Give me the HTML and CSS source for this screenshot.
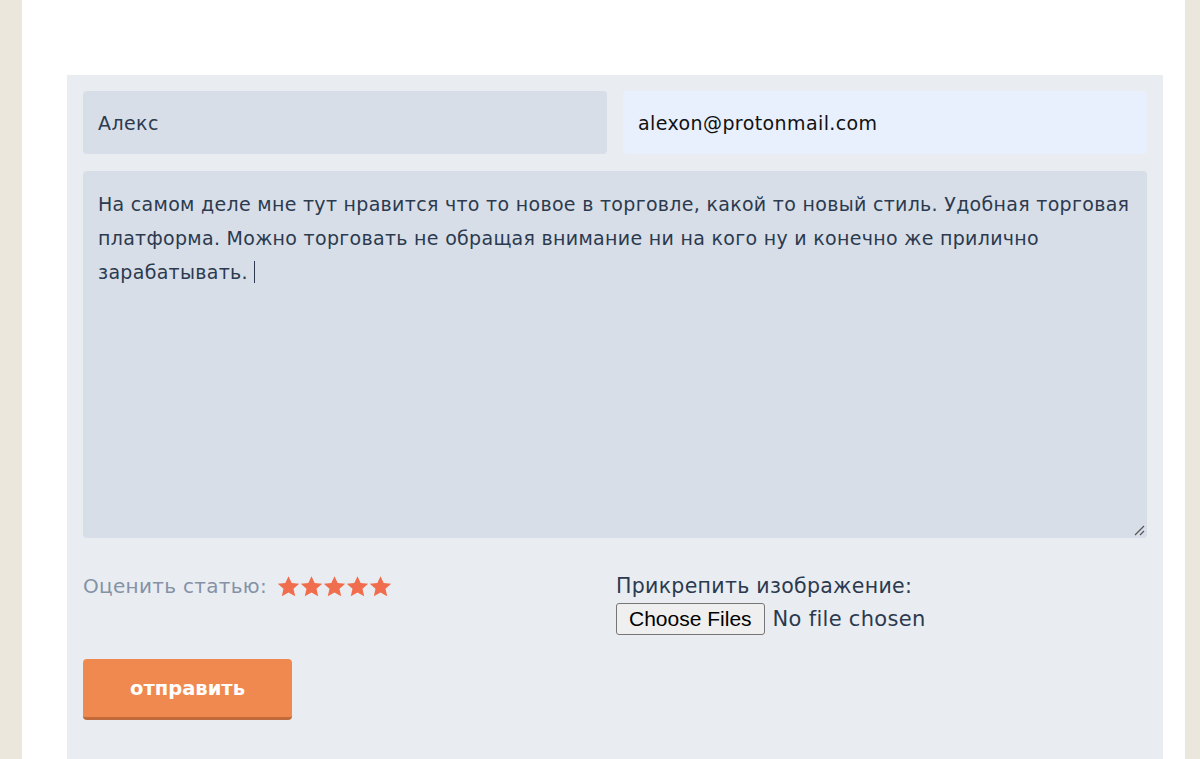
FILE: index.html
```html
<!DOCTYPE html>
<html lang="ru">
<head>
<meta charset="utf-8">
<title>Отзыв</title>
<link rel="stylesheet" href="styles.css">
</head>
<body>
<div class="page">
  <form class="panel">
    <div class="row">
      <div class="field name">Алекс</div>
      <div class="field email">alexon@protonmail.com</div>
    </div>
    <div class="area">
      <p>На самом деле мне тут нравится что то новое в торговле, какой то новый стиль. Удобная торговая платформа. Можно торговать не обращая внимание ни на кого ну и конечно же прилично зарабатывать. <span class="caret"></span></p>
      <svg class="grip" width="12" height="12" viewBox="0 0 12 12"><path d="M2 11 L11 2 M7 11 L11 7" stroke="#555" stroke-width="1.2" fill="none"/></svg>
    </div>
    <div class="bottom">
      <div class="rate">
        <span class="rate-label">Оценить статью:</span>
        <span class="stars">
          <svg viewBox="0 0 24 24" width="23" height="23"><path d="M12 1.2l3.3 7.2 7.9.8-6 5.2 1.8 7.8L12 18.2l-7 4 1.8-7.8-6-5.2 7.9-.8z" fill="#f06d4d"/></svg>
          <svg viewBox="0 0 24 24" width="23" height="23"><path d="M12 1.2l3.3 7.2 7.9.8-6 5.2 1.8 7.8L12 18.2l-7 4 1.8-7.8-6-5.2 7.9-.8z" fill="#f06d4d"/></svg>
          <svg viewBox="0 0 24 24" width="23" height="23"><path d="M12 1.2l3.3 7.2 7.9.8-6 5.2 1.8 7.8L12 18.2l-7 4 1.8-7.8-6-5.2 7.9-.8z" fill="#f06d4d"/></svg>
          <svg viewBox="0 0 24 24" width="23" height="23"><path d="M12 1.2l3.3 7.2 7.9.8-6 5.2 1.8 7.8L12 18.2l-7 4 1.8-7.8-6-5.2 7.9-.8z" fill="#f06d4d"/></svg>
          <svg viewBox="0 0 24 24" width="23" height="23"><path d="M12 1.2l3.3 7.2 7.9.8-6 5.2 1.8 7.8L12 18.2l-7 4 1.8-7.8-6-5.2 7.9-.8z" fill="#f06d4d"/></svg>
        </span>
      </div>
      <div class="attach">
        <div class="attach-label">Прикрепить изображение:</div>
        <div class="file">
          <span class="file-btn">Choose Files</span>
          <span class="file-text">No file chosen</span>
        </div>
      </div>
    </div>
    <div class="submit">отправить</div>
  </form>
</div>
</body>
</html>
```
FILE: styles.css
```css
html, body {
  margin: 0;
  padding: 0;
  height: 100%;
}
body {
  background: #ebe7dd;
  font-family: "DejaVu Sans", Verdana, sans-serif;
  overflow: hidden;
}
.page {
  background: #ffffff;
  margin: 0 15px 0 22px;
  padding: 75px 22px 0 45px;
  min-height: 100%;
  box-sizing: border-box;
}
.panel {
  background: #e9edf1;
  padding: 16px 16px 40px 16px;
  min-height: 700px;
  box-sizing: border-box;
}
.row {
  display: flex;
  gap: 16px;
}
.field {
  flex: 1;
  height: 63px;
  border-radius: 4px;
  display: flex;
  align-items: center;
  padding: 0 15px;
  font-size: 19px;
  letter-spacing: 0.4px;
  box-sizing: border-box;
}
.name {
  background: #d7dee7;
  color: #2c3a4f;
}
.email {
  background: #e8effd;
  color: #111;
}
.area {
  margin-top: 17px;
  height: 367px;
  background: #d7dee7;
  border-radius: 4px;
  position: relative;
  padding: 16px 12px 16px 15px;
  box-sizing: border-box;
}
.area p {
  margin: 0;
  font-size: 19px;
  letter-spacing: 0.3px;
  line-height: 34px;
  color: #2c3a4f;
}
.caret {
  display: inline-block;
  width: 1px;
  height: 22px;
  background: #2c3a4f;
  vertical-align: -4px;
}
.grip {
  position: absolute;
  right: 2px;
  bottom: 2px;
}
.bottom {
  display: flex;
  margin-top: 34px;
}
.rate {
  width: 533px;
  display: flex;
  align-items: center;
  gap: 10px;
  height: 28px;
}
.rate-label {
  font-size: 20px;
  letter-spacing: 0.3px;
  color: #8592a6;
}
.stars {
  display: flex;
  gap: 0;
}
.stars svg {
  display: block;
}
.attach-label {
  font-size: 20.5px;
  letter-spacing: 0.3px;
  color: #2c3a4f;
  line-height: 28px;
}
.file {
  display: flex;
  align-items: center;
  gap: 8px;
  margin-top: 3px;
}
.file-btn {
  font-family: "Liberation Sans", Arial, sans-serif;
  font-size: 21px;
  color: #000;
  background: #efefef;
  border: 1px solid #767676;
  border-radius: 3px;
  padding: 3px 12px 4px;
  line-height: 23px;
}
.file-text {
  font-size: 21px;
  letter-spacing: 0.3px;
  color: #2c3a4f;
}
.submit {
  margin-top: 24px;
  width: 209px;
  height: 58px;
  background: #f0894f;
  border-bottom: 3px solid #c06a3c;
  border-radius: 4px;
  color: #fff;
  font-weight: bold;
  font-size: 19.5px;
  display: flex;
  align-items: center;
  justify-content: center;
}
```
